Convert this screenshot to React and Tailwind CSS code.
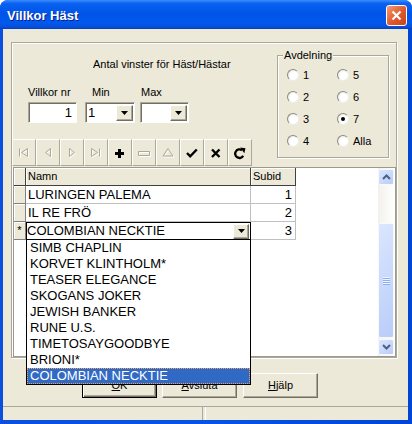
import React from "react";

const font = "font-['Liberation_Sans',Arial,sans-serif]";
const DIS = "#ACA899";

function Svg({ children }) {
  return (
    <svg width="16" height="16" viewBox="0 0 16 16" className="block">
      {children}
    </svg>
  );
}

function Disabled({ d }) {
  return (
    <Svg>
      <path d={d} transform="translate(1 1)" fill="none" stroke="#ffffff" strokeWidth="1" />
      <path d={d} fill="none" stroke={DIS} strokeWidth="1" />
    </Svg>
  );
}

const icons = [
  <Disabled key="first" d="M3.5 3.5v8M11.5 3.5L5.5 7.5l6 4z" />,
  <Disabled key="prev" d="M10.5 3.5L5.5 7.5l5 4z" />,
  <Disabled key="next" d="M5.5 3.5l5 4-5 4z" />,
  <Disabled key="last" d="M3.5 3.5l6 4-6 4zM11.5 3.5v8" />,
  <Svg key="plus">
    <rect x="3" y="7" width="9" height="3" fill="#000" />
    <rect x="6" y="4" width="3" height="9" fill="#000" />
  </Svg>,
  <Disabled key="minus" d="M2.5 6.5h11v4h-11z" />,
  <Disabled key="tri" d="M8 3.5l5 7.5H3z" />,
  <Svg key="check">
    <path d="M3 8l3.2 3.3L12.8 4.5" fill="none" stroke="#000" strokeWidth="2.4" />
  </Svg>,
  <Svg key="x">
    <path d="M4 4.5l7.5 7.5M11.5 4.5L4 12" fill="none" stroke="#000" strokeWidth="2.4" />
  </Svg>,
  <Svg key="refresh">
    <path d="M11.2 10.8A4.3 4.3 0 1 1 10 5.2" fill="none" stroke="#000" strokeWidth="2.3" />
    <path d="M8.2 2.6l5.3 0.6-1.2 5z" fill="#000" />
  </Svg>,
];

function Radio({ label, checked }) {
  return (
    <div className="flex items-center h-[22px]">
      <div className="w-[12px] h-[12px] rounded-full border border-[#8d8c84] border-r-[#f0efe8] border-b-[#f0efe8] bg-[radial-gradient(circle_at_60%_60%,#ffffff_45%,#dcdad0)] flex items-center justify-center">
        {checked && <div className="w-[4px] h-[4px] rounded-full bg-black" />}
      </div>
      <span className="ml-[4px] text-[11px] leading-[13px] text-black">{label}</span>
    </div>
  );
}

function DropBtn({ className = "" }) {
  return (
    <div
      className={`flex items-center justify-center bg-[#ECE9D8] border border-t-white border-l-white border-r-[#716F64] border-b-[#716F64] shadow-[inset_-1px_-1px_0_#ACA899] ${className}`}
    >
      <svg width="7" height="4" viewBox="0 0 7 4" className="block">
        <path d="M0 0h7L3.5 4z" fill="#000" />
      </svg>
    </div>
  );
}

const sunken =
  "bg-white border border-t-[#ACA899] border-l-[#ACA899] border-b-white border-r-white shadow-[inset_1px_1px_0_#716F64]";

function Chevron({ up }) {
  return (
    <svg width="9" height="6" viewBox="0 0 9 6" className="block">
      <path
        d={up ? "M1 5l3.5-3.5L8 5" : "M1 1l3.5 3.5L8 1"}
        fill="none"
        stroke="#4D6185"
        strokeWidth="2"
      />
    </svg>
  );
}

const xpBtn =
  "rounded-[2px] border border-[#f7f9ff] bg-[linear-gradient(135deg,#dbe6fe,#b9cdf9)] flex items-center justify-center";

const rows = [
  { name: "LURINGEN PALEMA", id: "1" },
  { name: "IL RE FRÖ", id: "2" },
];

const list = [
  "SIMB CHAPLIN",
  "KORVET KLINTHOLM*",
  "TEASER ELEGANCE",
  "SKOGANS JOKER",
  "JEWISH BANKER",
  "RUNE U.S.",
  "TIMETOSAYGOODBYE",
  "BRIONI*",
];

function WinButton({ children, def }) {
  return (
    <div
      className={`w-[75px] h-[25px] flex items-center justify-center text-[11px] leading-[13px] bg-[#ECE9D8] ${
        def
          ? "border border-black shadow-[inset_1px_1px_0_#ffffff,inset_-1px_-1px_0_#716F64,inset_-2px_-2px_0_#ACA899]"
          : "border border-t-white border-l-white border-r-[#716F64] border-b-[#716F64] shadow-[inset_-1px_-1px_0_#ACA899]"
      }`}
    >
      {children}
    </div>
  );
}

export default function App() {
  return (
    <div className={`${font} relative w-[412px] h-[424px] bg-white overflow-hidden text-black`}>
      <div className="flex flex-col w-full h-full rounded-t-[8px] overflow-hidden bg-[linear-gradient(90deg,#0a4fe0,#0753e6_50%,#0046d5)]">
        {/* Title bar */}
        <div className="h-[29px] shrink-0 flex items-start pl-[7px] pr-[5px] bg-[linear-gradient(180deg,#3a8cff_0%,#0a62f0_12%,#0055e8_45%,#0058ee_80%,#0a4fd8_93%,#003fc8_100%)]">
          <span className="flex-1 mt-[8px] text-white font-bold text-[13px] leading-[16px] [text-shadow:1px_1px_0_#0b1f8e]">
            Villkor Häst
          </span>
          <div className="mt-[5px] w-[21px] h-[21px] rounded-[3px] border border-white bg-[linear-gradient(135deg,#f29b76,#e0582c_55%,#c9441d)] flex items-center justify-center">
            <svg width="11" height="11" viewBox="0 0 11 11" className="block">
              <path d="M1.5 1.5l8 8M9.5 1.5l-8 8" stroke="#fff" strokeWidth="2.2" fill="none" />
            </svg>
          </div>
        </div>

        {/* Frame + client */}
        <div className="flex-1 flex pl-[3px] pr-[4px] pb-[4px]">
          <div className="flex-1 bg-[#ECE9D8] flex flex-col pt-[13px]">
            {/* Main panel */}
            <div className="ml-[8px] w-[386px] h-[316px] border border-[#ACA899] shadow-[inset_1px_1px_0_#fff,1px_1px_0_#fff] flex flex-col">
              {/* Top row */}
              <div className="h-[124px] flex">
                <div className="w-[265px] flex flex-col">
                  <div className="mt-[15px] ml-[81px] text-[11px] leading-[13px]">
                    Antal vinster för Häst/Hästar
                  </div>
                  <div className="mt-[15px] flex">
                    <div className="ml-[16px] flex flex-col">
                      <span className="text-[11px] leading-[13px] mb-[3px]">Villkor nr</span>
                      <div className={`w-[49px] h-[21px] ${sunken} flex items-center justify-end pr-[4px] text-[13px] leading-[15px]`}>
                        1
                      </div>
                    </div>
                    <div className="ml-[8px] flex flex-col">
                      <span className="pl-[7px] text-[11px] leading-[13px] mb-[3px]">Min</span>
                      <div className={`w-[50px] h-[21px] ${sunken} flex items-center pl-[2px] pr-[1px] text-[13px] leading-[15px]`}>
                        <span className="flex-1">1</span>
                        <DropBtn className="w-[17px] h-[16px]" />
                      </div>
                    </div>
                    <div className="ml-[5px] flex flex-col">
                      <span className="pl-[1px] text-[11px] leading-[13px] mb-[3px]">Max</span>
                      <div className={`w-[49px] h-[21px] ${sunken} flex items-center pl-[2px] pr-[1px]`}>
                        <span className="flex-1" />
                        <DropBtn className="w-[17px] h-[16px]" />
                      </div>
                    </div>
                  </div>
                  {/* Toolbar */}
                  <div className="mt-[16px] flex">
                    {icons.map((ic, i) => (
                      <div
                        key={i}
                        className="w-[24px] h-[27px] flex items-center justify-center bg-[#ECE9D8] border border-t-white border-l-white border-r-[#ACA899] border-b-[#ACA899]"
                      >
                        {ic}
                      </div>
                    ))}
                  </div>
                </div>
                {/* Avdelning group */}
                <div className="relative mt-[12px] w-[112px] h-[103px] border border-[#ACA899] shadow-[inset_1px_1px_0_#fff,1px_1px_0_#fff]">
                  <span className="absolute -top-[7px] left-[5px] px-[1px] bg-[#ECE9D8] text-[11px] leading-[13px]">
                    Avdelning
                  </span>
                  <div className="grid grid-rows-4 grid-flow-col grid-cols-[50px_50px] pl-[9px] pt-[8px]">
                    <Radio label="1" />
                    <Radio label="2" />
                    <Radio label="3" />
                    <Radio label="4" />
                    <Radio label="5" />
                    <Radio label="6" />
                    <Radio label="7" checked />
                    <Radio label="Alla" />
                  </div>
                </div>
              </div>

              {/* Grid */}
              <div className="ml-[1px] w-[383px] h-[190px] border border-[#9c9a8f] bg-white flex">
                <div className="flex-1 flex flex-col">
                  {/* header */}
                  <div className="flex h-[18px]">
                    <div className="w-[12px] bg-[#ECE9D8] border-r border-b border-[#404040] shadow-[inset_1px_1px_0_#fff]" />
                    <div className="w-[225px] bg-[#ECE9D8] border-r border-b border-[#404040] shadow-[inset_1px_1px_0_#fff] pl-[2px] text-[11px] leading-[16px]">
                      Namn
                    </div>
                    <div className="w-[45px] bg-[#ECE9D8] border-r border-b border-[#404040] shadow-[inset_1px_1px_0_#fff] pl-[2px] text-[11px] leading-[16px]">
                      Subid
                    </div>
                  </div>
                  {rows.map((r) => (
                    <div key={r.id} className="flex h-[18px]">
                      <div className="w-[12px] bg-[#ECE9D8] border-r border-b border-[#808080] shadow-[inset_1px_1px_0_#fff]" />
                      <div className="w-[225px] border-r border-b border-[#C0C0C0] pl-[2px] text-[13px] leading-[17px] whitespace-nowrap">
                        {r.name}
                      </div>
                      <div className="w-[45px] border-r border-b border-[#C0C0C0] pr-[3px] text-right text-[13px] leading-[17px]">
                        {r.id}
                      </div>
                    </div>
                  ))}
                  <div className="flex h-[18px]">
                    <div className="w-[12px] bg-[#ECE9D8] border-r border-b border-[#808080] shadow-[inset_1px_1px_0_#fff] flex items-center justify-center text-[11px] leading-[11px]">
                      *
                    </div>
                    <div className="w-[225px] border border-black flex items-center pr-[1px] text-[13px] leading-[16px] whitespace-nowrap">
                      <span className="flex-1">COLOMBIAN NECKTIE</span>
                      <DropBtn className="w-[16px] h-[15px]" />
                    </div>
                    <div className="w-[45px] border-r border-b border-[#C0C0C0] pr-[3px] text-right text-[13px] leading-[17px]">
                      3
                    </div>
                  </div>
                </div>
                {/* Scrollbar */}
                <div className="w-[16px] flex flex-col py-[1px] bg-[linear-gradient(90deg,#f3f1ec,#fefefb)]">
                  <div className={`h-[16px] ${xpBtn}`}>
                    <Chevron up />
                  </div>
                  <div className="h-[38px]" />
                  <div className={`h-[115px] ${xpBtn} flex-col gap-[1px]`}>
                    <div className="w-[7px] h-[1px] bg-[#eef4fe] shadow-[0_1px_0_#8cb0f8]" />
                    <div className="w-[7px] h-[1px] bg-[#eef4fe] shadow-[0_1px_0_#8cb0f8]" />
                    <div className="w-[7px] h-[1px] bg-[#eef4fe] shadow-[0_1px_0_#8cb0f8]" />
                    <div className="w-[7px] h-[1px] bg-[#eef4fe] shadow-[0_1px_0_#8cb0f8]" />
                  </div>
                  <div className="flex-1" />
                  <div className={`h-[16px] ${xpBtn}`}>
                    <Chevron />
                  </div>
                </div>
                <div className="w-[1px]" />
              </div>
            </div>

            {/* Buttons */}
            <div className="mt-[15px] flex">
              <div className="ml-[79px]">
                <WinButton def>
                  <span className="underline underline-offset-1">O</span>K
                </WinButton>
              </div>
              <div className="ml-[5px]">
                <WinButton>
                  <span className="underline underline-offset-1">A</span>vsluta
                </WinButton>
              </div>
              <div className="ml-[6px]">
                <WinButton>
                  <span className="underline underline-offset-1">H</span>jälp
                </WinButton>
              </div>
            </div>

            {/* Status bar */}
            <div className="mt-[8px] h-[14px] flex border-t border-[#ACA899]">
              <div className="w-[200px] border-r border-[#ACA899]" />
              <div className="w-[2px]" />
              <div className="flex-1 border-l border-[#ffffff]" />
            </div>
          </div>
        </div>
      </div>

      {/* Dropdown list overlay */}
      <div className="absolute left-[26px] top-[239px] w-[225px] h-[146px] border border-black bg-white flex flex-col text-[13px] leading-[16px]">
        {list.map((t) => (
          <div key={t} className="h-[16px] pl-[3px] whitespace-nowrap">
            {t}
          </div>
        ))}
        <div className="h-[16px] pl-[2px] bg-[#316AC5] text-white border border-dotted border-[#f0a060] leading-[14px] whitespace-nowrap">
          COLOMBIAN NECKTIE
        </div>
      </div>
    </div>
  );
}
